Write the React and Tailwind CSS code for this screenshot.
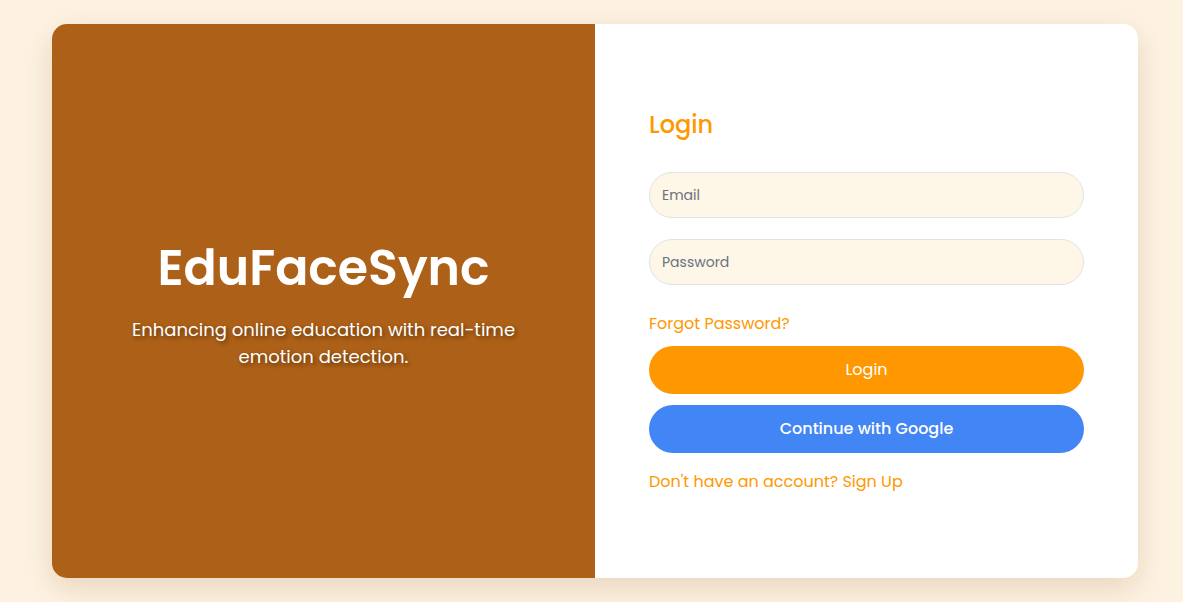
export default function App() {
  const font = { fontFamily: '"Poppins", "DejaVu Sans", "Open Sans", sans-serif' };
  return (
    <div className="w-full h-[602px] bg-[#fdf2e2] flex items-center" style={font}>
      <div className="ml-[52px] w-[1086px] h-[554px] rounded-[15px] overflow-hidden flex shadow-[0_10px_30px_rgba(150,100,40,0.2)]">
        <div className="w-1/2 bg-[#ad6017] flex flex-col items-center justify-center text-white px-10 pt-[6px]">
          <h1 className="text-[49px] font-semibold leading-[60px] mb-[18px]">EduFaceSync</h1>
          <p className="text-[18px] text-center leading-[27px] max-w-[400px] [text-shadow:2px_2px_4px_rgba(0,0,0,0.45)]">
            Enhancing online education with real-time emotion detection.
          </p>
        </div>
        <div className="w-1/2 bg-white flex flex-col px-[54px] pt-[85px]">
          <h2 className="text-[24px] leading-[32px] font-medium text-[#ff9800] mb-[31px]">Login</h2>
          <input
            placeholder="Email"
            className="w-full h-[46px] rounded-full bg-[#fef6e6] border border-[#e2e2e2] px-3 text-[14px] text-[#4b5563] placeholder:text-[#6b7280] outline-none mb-[21px]"
          />
          <input
            type="password"
            placeholder="Password"
            className="w-full h-[46px] rounded-full bg-[#fef6e6] border border-[#e2e2e2] px-3 text-[14px] text-[#4b5563] placeholder:text-[#6b7280] outline-none mb-[27px]"
          />
          <a className="text-[16px] text-[#ff9800] leading-[24px] mb-[10px] cursor-pointer">Forgot Password?</a>
          <button className="w-full h-[48px] rounded-full bg-[#ff9800] text-white text-[16px] mb-[11px]">Login</button>
          <button className="w-full h-[48px] rounded-full bg-[#4285f4] text-white text-[16px] font-medium mb-[17px]">Continue with Google</button>
          <p className="text-[16px] text-[#ff9800] leading-[24px]">Don't have an account? Sign Up</p>
        </div>
      </div>
    </div>
  );
}
